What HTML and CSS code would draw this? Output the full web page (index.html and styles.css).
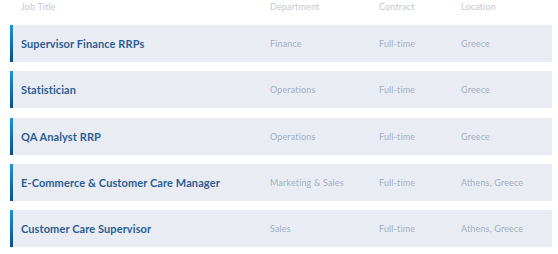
FILE: index.html
```html
<!DOCTYPE html>
<html>
<head>
<meta charset="utf-8">
<link rel="stylesheet" href="styles.css">
</head>
<body>
<div class="jobs">
  <div class="head">
    <div class="c-title">Job Title</div>
    <div>Department</div>
    <div>Contract</div>
    <div>Location</div>
  </div>
  <div class="list">
    <div class="row">
      <div class="c-title title">Supervisor Finance RRPs</div>
      <div>Finance</div>
      <div>Full-time</div>
      <div>Greece</div>
    </div>
    <div class="row">
      <div class="c-title title">Statistician</div>
      <div>Operations</div>
      <div>Full-time</div>
      <div>Greece</div>
    </div>
    <div class="row">
      <div class="c-title title">QA Analyst RRP</div>
      <div>Operations</div>
      <div>Full-time</div>
      <div>Greece</div>
    </div>
    <div class="row">
      <div class="c-title title">E-Commerce &amp; Customer Care Manager</div>
      <div>Marketing &amp; Sales</div>
      <div>Full-time</div>
      <div>Athens, Greece</div>
    </div>
    <div class="row">
      <div class="c-title title">Customer Care Supervisor</div>
      <div>Sales</div>
      <div>Full-time</div>
      <div>Athens, Greece</div>
    </div>
  </div>
</div>
</body>
</html>
```
FILE: styles.css
```css
html, body {
  margin: 0;
  padding: 0;
  background: #fff;
  font-family: Lato, "Open Sans", sans-serif;
}
.jobs {
  padding: 0 6px 0 10px;
}
.head, .row {
  display: grid;
  grid-template-columns: 260px 109px 82px 1fr;
  align-items: center;
}
.head {
  height: 13px;
  margin-bottom: 12px;
  font-size: 9px;
  letter-spacing: 0.15px;
  color: #c4c8cc;
}
.c-title {
  padding-left: 11px;
}
.list {
  display: flex;
  flex-direction: column;
  gap: 9.25px;
}
.row {
  grid-template-columns: 257px 109px 82px 1fr;
  height: 37px;
  background: #e9edf3;
  font-size: 9px;
  letter-spacing: 0.15px;
  color: #a2aec0;
  border-left: 3px solid #0c5fa6;
  border-image: linear-gradient(to bottom, #1a98d8, #0b4a8e) 1;
}
.row .c-title {
  padding-left: 8px;
}
.title {
  font-size: 11px;
  font-weight: 700;
  color: #2c5d95;
  letter-spacing: 0.1px;
}
```
